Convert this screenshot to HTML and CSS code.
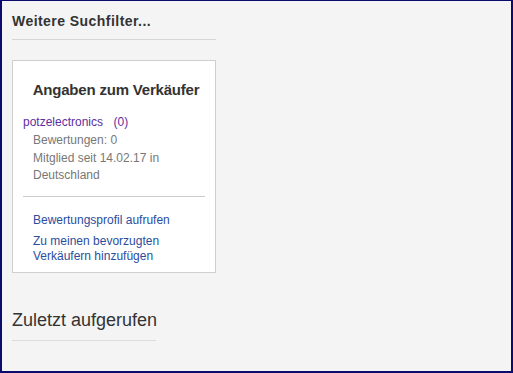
FILE: index.html
```html
<!DOCTYPE html>
<html lang="de">
<head>
  <meta charset="UTF-8" />
  <title>Verkäufer</title>
  <link rel="stylesheet" href="styles.css">
</head>
<body>
  <div class="frame">
    <div class="sidebar">
      <h3 class="filter-title">Weitere Suchfilter...</h3>

      <div class="seller-box">
        <h2 class="seller-title">Angaben zum Verkäufer</h2>
        <div class="seller-name">
          <a href="#">potzelectronics</a>
          <a href="#" class="score">(0)</a>
        </div>
        <div class="seller-info">
          <div>Bewertungen: 0</div>
          <div>Mitglied seit 14.02.17 in Deutschland</div>
        </div>
        <div class="seller-links">
          <a href="#">Bewertungsprofil aufrufen</a>
          <a href="#" class="tight">Zu meinen bevorzugten Verkäufern hinzufügen</a>
        </div>
      </div>

      <h2 class="recent-title">Zuletzt aufgerufen</h2>
    </div>
  </div>
</body>
</html>
```

FILE: styles.css
```css
html, body {
  margin: 0;
  height: 100%;
}

body {
  font-family: "Liberation Sans", Arial, sans-serif;
  color: #333;
}

.frame {
  box-sizing: border-box;
  height: 100%;
  background: #f4f4f4;
  border: 2px solid #0b0b6e;
  border-top-width: 1px;
  padding: 0 10px;
}

.sidebar {
  width: 204px;
}

.filter-title {
  margin: 0;
  padding: 12px 0 10px;
  font-size: 14px;
  font-weight: bold;
  letter-spacing: 0.45px;
  color: #333;
  border-bottom: 1px solid #d6d6d6;
}

.seller-box {
  margin-top: 20px;
  background: #fff;
  border: 1px solid #cfcfcf;
  padding: 20px 10px 8px;
}

.seller-title {
  margin: 0 0 14px;
  padding-left: 4px;
  font-size: 15px;
  font-weight: bold;
  letter-spacing: -0.2px;
  text-align: center;
  color: #333;
}

.seller-name a {
  color: #5e2c9e;
  font-size: 12px;
  text-decoration: none;
}

.seller-name .score {
  margin-left: 6px;
}

.seller-info {
  padding: 2px 0 11px 10px;
  font-size: 12px;
  line-height: 17.5px;
  color: #777;
  border-bottom: 1px solid #ccc;
}

.seller-links {
  padding: 16px 0 0 10px;
  font-size: 12px;
  line-height: 15px;
}

.seller-links a {
  display: block;
  color: #2a4d9e;
  text-decoration: none;
}

.seller-links .tight {
  margin-top: 6px;
}

.recent-title {
  width: 144px;
  margin: 37px 0 0;
  padding-bottom: 9px;
  font-size: 18px;
  font-weight: normal;
  white-space: nowrap;
  color: #333;
  border-bottom: 1px solid #dcdcdc;
}
```
